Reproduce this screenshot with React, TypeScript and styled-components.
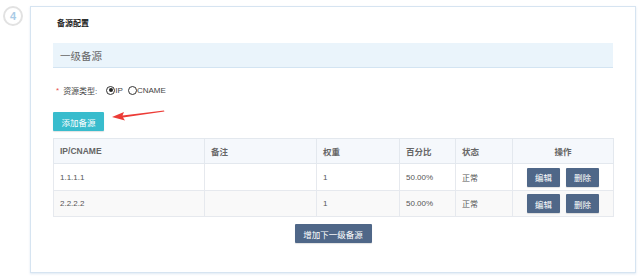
import React from "react";
import { styled, createGlobalStyle } from "styled-components";

const GlobalStyle = createGlobalStyle`
  html, body {
    margin: 0;
    padding: 0;
    background: #ffffff;
    font-family: "Liberation Sans", "Noto Sans CJK SC", sans-serif;
  }
`;

const Page = styled.div`
  display: flex;
  align-items: flex-start;
  padding: 6px 0 0 3px;
  width: 642px;
  height: 280px;
  box-sizing: border-box;
`;

const StepCircle = styled.div`
  width: 16px;
  height: 16px;
  border: 2px solid #e2e2e2;
  border-radius: 50%;
  display: flex;
  align-items: center;
  justify-content: center;
  color: #a9cbe6;
  font-size: 11px;
  font-weight: bold;
  flex-shrink: 0;
`;

const Card = styled.div`
  margin-left: 7px;
  width: 606px;
  height: 267px;
  box-sizing: border-box;
  border: 1px solid #d6e4f1;
  box-shadow: 0 1px 2px rgba(160, 190, 220, 0.35);
  padding: 0 22px 0 22px;
  background: #fff;
`;

const Title = styled.div`
  margin-top: 11px;
  padding-left: 4px;
  font-size: 8px;
  line-height: 12px;
  font-weight: bold;
  color: #222;
`;

const SectionHeader = styled.div`
  margin-top: 13px;
  height: 24px;
  background: #eaf4fb;
  border-bottom: 1px solid #d3e4f2;
  display: flex;
  align-items: center;
  padding-left: 7px;
  font-size: 10.5px;
  color: #666;
`;

const TypeRow = styled.div`
  margin-top: 16px;
  height: 12px;
  display: flex;
  align-items: center;
  padding-left: 3px;
  font-size: 8px;
  color: #444;
`;

const Star = styled.span`
  color: #e94e4e;
  margin-right: 4px;
`;

const Label = styled.span`
  margin-right: 9px;
`;

const Radio = styled.span<{ $checked?: boolean }>`
  width: 7px;
  height: 7px;
  border: 1px solid #333;
  border-radius: 50%;
  display: inline-flex;
  align-items: center;
  justify-content: center;
  &::after {
    content: "";
    width: 4px;
    height: 4px;
    border-radius: 50%;
    background: ${(p) => (p.$checked ? "#222" : "transparent")};
  }
`;

const RadioText = styled.span`
  margin-right: 5px;
`;

const ActionRow = styled.div`
  margin-top: 16px;
  display: flex;
  align-items: flex-start;
`;

const Button = styled.button<{ $tone: "teal" | "slate" }>`
  border: none;
  border-radius: 1px;
  color: #fff;
  font-family: inherit;
  font-size: 8.5px;
  padding: 0;
  height: 19px;
  background: ${(p) => (p.$tone === "teal" ? "#38bccd" : "#4f6788")};
  box-shadow: 0 1px 1px rgba(0, 0, 0, 0.12);
  cursor: pointer;
`;

const AddButton = styled(Button)`
  width: 51px;
`;

const Arrow = styled.svg`
  margin-left: 7px;
  margin-top: -4px;
`;

const Table = styled.table`
  margin-top: 7px;
  width: 560px;
  border-collapse: collapse;
  table-layout: fixed;
  font-size: 8px;
  color: #555;
`;

const Th = styled.th<{ $center?: boolean }>`
  height: 24px;
  background: #f5f8fc;
  border: 1px solid #e3e8ee;
  text-align: ${(p) => (p.$center ? "center" : "left")};
  padding: 0 6px;
  font-size: 8.5px;
  font-weight: bold;
  color: #666;
`;

const Tr = styled.tr<{ $striped?: boolean }>`
  background: ${(p) => (p.$striped ? "#f9f9f9" : "#fff")};
`;

const Td = styled.td<{ $h: number }>`
  height: ${(p) => p.$h}px;
  border: 1px solid #e6e9ee;
  padding: 0 6px;
`;

const Ops = styled.div`
  display: flex;
  justify-content: center;
  gap: 6px;
`;

const OpButton = styled(Button)`
  width: 33px;
`;

const Footer = styled.div`
  display: flex;
  justify-content: center;
  width: 560px;
  margin-top: 7px;
`;

const NextButton = styled(Button)`
  width: 77px;
`;

const rows = [
  { ip: "1.1.1.1", note: "", weight: "1", pct: "50.00%", status: "正常", h: 26 },
  { ip: "2.2.2.2", note: "", weight: "1", pct: "50.00%", status: "正常", h: 25 },
];

export default function App() {
  return (
    <>
      <GlobalStyle />
      <Page>
        <StepCircle>4</StepCircle>
        <Card>
          <Title>备源配置</Title>
          <SectionHeader>一级备源</SectionHeader>
          <TypeRow>
            <Star>*</Star>
            <Label>资源类型:</Label>
            <Radio $checked />
            <RadioText>IP</RadioText>
            <Radio />
            <RadioText>CNAME</RadioText>
          </TypeRow>
          <ActionRow>
            <AddButton $tone="teal">添加备源</AddButton>
            <Arrow width="54" height="14" viewBox="0 0 54 14">
              <polygon points="1,9 13,4 11.5,7.4 53,2.4 53.4,3.6 12,9.4 14,12.6" fill="#ec3b36" />
            </Arrow>
          </ActionRow>
          <Table>
            <colgroup>
              <col style={{ width: 151 }} />
              <col style={{ width: 112 }} />
              <col style={{ width: 83 }} />
              <col style={{ width: 56 }} />
              <col style={{ width: 57 }} />
              <col style={{ width: 101 }} />
            </colgroup>
            <thead>
              <tr>
                <Th>IP/CNAME</Th>
                <Th>备注</Th>
                <Th>权重</Th>
                <Th>百分比</Th>
                <Th>状态</Th>
                <Th $center>操作</Th>
              </tr>
            </thead>
            <tbody>
              {rows.map((r, i) => (
                <Tr key={r.ip} $striped={i % 2 === 1}>
                  <Td $h={r.h}>{r.ip}</Td>
                  <Td $h={r.h}>{r.note}</Td>
                  <Td $h={r.h}>{r.weight}</Td>
                  <Td $h={r.h}>{r.pct}</Td>
                  <Td $h={r.h}>{r.status}</Td>
                  <Td $h={r.h}>
                    <Ops>
                      <OpButton $tone="slate">编辑</OpButton>
                      <OpButton $tone="slate">删除</OpButton>
                    </Ops>
                  </Td>
                </Tr>
              ))}
            </tbody>
          </Table>
          <Footer>
            <NextButton $tone="slate">增加下一级备源</NextButton>
          </Footer>
        </Card>
      </Page>
    </>
  );
}
